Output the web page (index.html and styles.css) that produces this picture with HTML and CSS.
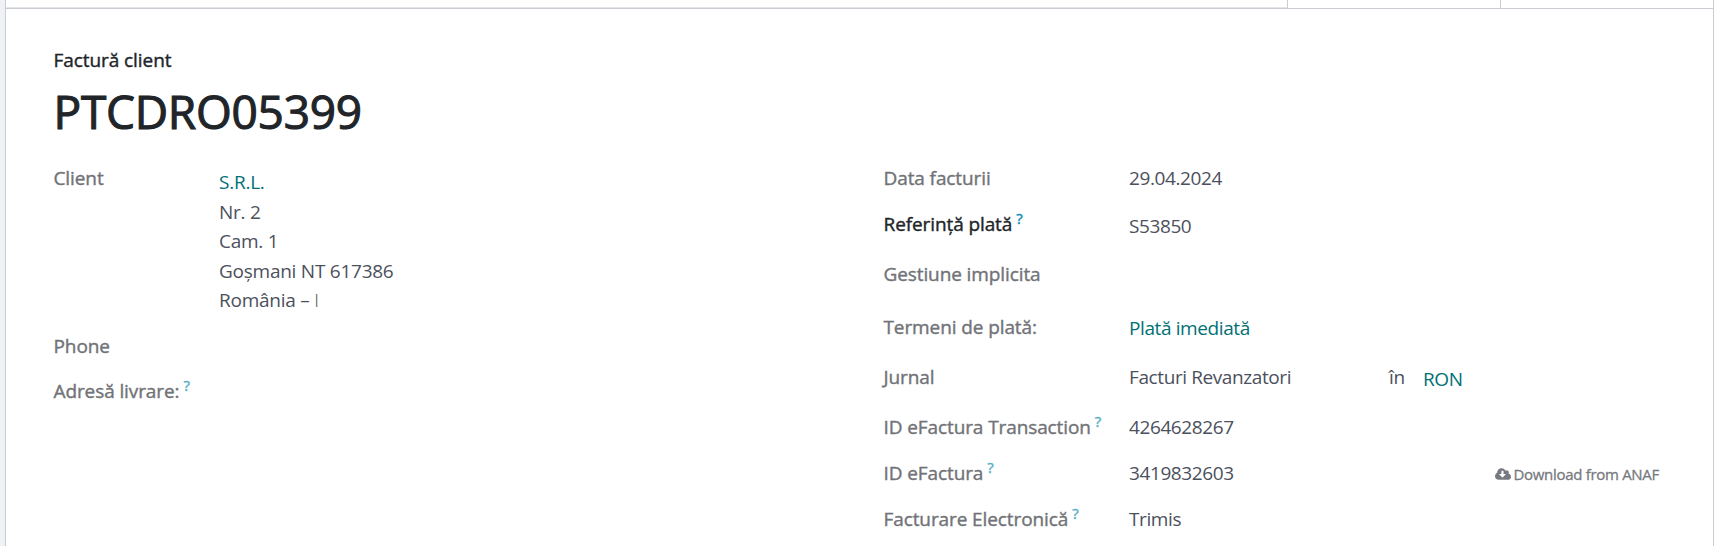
FILE: index.html
```html
<!DOCTYPE html>
<html lang="ro">
<head>
    <meta charset="UTF-8">
    <meta name="viewport" content="width=device-width, initial-scale=1.0">
    <title>Factură client</title>
    <link rel="stylesheet" href="styles.css">
</head>
<body>
    <div class="sheet">
        <div class="statusbar">
            <div class="status-main"></div>
            <div class="status-step"></div>
            <div class="status-step"></div>
        </div>

        <div class="form">
            <div class="doc-type">Factură client</div>
            <h1 class="doc-number">PTCDRO05399</h1>

            <div class="columns">
                <div class="group group-left">
                    <div class="row row-client">
                        <label class="label">Client</label>
                        <div class="address">
                            <a class="link" href="#">S.R.L.</a>
                            <span>Nr. 2</span>
                            <span>Cam. 1</span>
                            <span>Goșmani NT 617386</span>
                            <span>România – <span class="cut">I</span></span>
                        </div>
                    </div>
                    <div class="row row-phone">
                        <label class="label">Phone</label>
                    </div>
                    <div class="row">
                        <label class="label">Adresă livrare:<sup>?</sup></label>
                    </div>
                </div>

                <div class="group group-right">
                    <div class="row row-46">
                        <label class="label">Data facturii</label>
                        <div class="value">29.04.2024</div>
                    </div>
                    <div class="row row-50">
                        <label class="label required">Referință plată<sup>?</sup></label>
                        <div class="value value-low">S53850</div>
                    </div>
                    <div class="row row-53">
                        <label class="label">Gestiune implicita</label>
                    </div>
                    <div class="row row-50">
                        <label class="label">Termeni de plată:</label>
                        <div class="value value-link"><a class="link" href="#">Plată imediată</a></div>
                    </div>
                    <div class="row row-50">
                        <label class="label">Jurnal</label>
                        <div class="value journal">
                            <span class="journal-name">Facturi Revanzatori</span>
                            <span class="journal-in">în</span>
                            <a class="link currency" href="#">RON</a>
                        </div>
                    </div>
                    <div class="row row-46">
                        <label class="label">ID eFactura Transaction<sup>?</sup></label>
                        <div class="value">4264628267</div>
                    </div>
                    <div class="row row-46">
                        <label class="label">ID eFactura<sup>?</sup></label>
                        <div class="value value-split">
                            <span>3419832603</span>
                            <button class="download" type="button">
                                <svg class="cloud" viewBox="0 0 1920 1408" aria-hidden="true">
                                    <path fill-rule="evenodd" d="M1280 736q0-14-9-23t-23-9h-224V352q0-13-9.500-22.500T992 320H800q-13 0-22.500 9.500T768 352v352H544q-13 0-22.500 9.500T512 736q0 14 9 23l352 352q9 9 23 9t23-9l351-351q10-12 10-24zM1920 1024q0 159-112.500 271.500T1536 1408H448q-185 0-316.500-131.500T0 960q0-130 70-240t188-165q-2-30-2-43 0-212 150-362T768 0q156 0 285.500 87T1242 318q71-62 166-62 106 0 181 75t75 181q0 76-41 138 130 31 213.500 135.500T1920 1024z"/>
                                </svg>
                                <span>Download from ANAF</span>
                            </button>
                        </div>
                    </div>
                    <div class="row">
                        <label class="label">Facturare Electronică<sup>?</sup></label>
                        <div class="value">Trimis</div>
                    </div>
                </div>
            </div>
        </div>
    </div>
</body>
</html>
```

FILE: styles.css
```css
:root {
    --border: #c9ccd2;
    --text: #4c505c;
    --muted: #717378;
    --dark: #212529;
    --link: #017075;
    --help: #0d8bb0;
}

* {
    box-sizing: border-box;
}

body {
    margin: 0;
    height: 546px;
    overflow: hidden;
    background: #f0f1f6;
    color: var(--text);
    font-family: "Open Sans", "Noto Sans", sans-serif;
    font-size: 19px;
    line-height: 30px;
}

.sheet {
    height: 546px;
    margin-left: 5px;
    background: #fff;
    border-left: 1px solid var(--border);
    border-right: 1px solid var(--border);
}

.statusbar {
    display: flex;
    height: 9px;
    border-bottom: 1px solid var(--border);
}

.status-main {
    flex: 1;
    border-bottom: 1px solid #e3e5ea;
}

.status-step {
    width: 213px;
    border-left: 1px solid var(--border);
}

.form {
    padding: 36px 54px 0 47.5px;
}

.doc-type {
    color: var(--dark);
    letter-spacing: -0.07px;
    -webkit-text-stroke: 0.4px;
}

.doc-number {
    margin: 6px 0 22px;
    color: var(--dark);
    font-size: 46px;
    font-weight: 400;
    line-height: 60px;
    letter-spacing: -0.25px;
    -webkit-text-stroke: 1.1px;
}

.columns {
    display: flex;
}

.group-left {
    width: 830px;
}

.group-right {
    flex: 1;
}

.row {
    display: flex;
}

.row-client {
    height: 168px;
}

.row-phone {
    height: 45px;
}

.row-46 {
    height: 46px;
}

.row-50 {
    height: 50px;
}

.row-53 {
    height: 53px;
}

.label {
    flex: none;
    width: 245.5px;
    color: var(--muted);
    letter-spacing: -0.1px;
    white-space: nowrap;
    -webkit-text-stroke: 0.4px;
}

.group-left .label {
    width: 165.5px;
}

.label.required {
    color: var(--dark);
}

sup {
    margin-left: 4px;
    color: var(--help);
    font-size: 15px;
    line-height: 0;
    opacity: 0.7;
}

.required sup {
    opacity: 1;
}

.value {
    flex: 1;
    letter-spacing: -0.4px;
}

.value-low {
    padding-top: 2px;
}

.value-link {
    padding-top: 1px;
}

.link {
    color: var(--link);
    text-decoration: none;
}

.address {
    display: flex;
    flex-direction: column;
    align-items: flex-start;
    padding-top: 5px;
    line-height: 29.5px;
    letter-spacing: -0.25px;
}

.cut {
    font-weight: 300;
}

.journal {
    display: flex;
}

.journal-name {
    width: 260px;
}

.journal-in {
    width: 34px;
}

.currency {
    padding-top: 2px;
}

.value-split {
    display: flex;
    justify-content: space-between;
}

.download {
    display: flex;
    align-items: center;
    height: 32px;
    padding: 0;
    border: 0;
    background: none;
    color: #767980;
    font: 15px/30px "Open Sans", "Noto Sans", sans-serif;
    letter-spacing: -0.3px;
    -webkit-text-stroke: 0.3px;
}

.cloud {
    width: 16px;
    height: 12px;
    margin-right: 2px;
    fill: currentColor;
    stroke: none;
}
```
